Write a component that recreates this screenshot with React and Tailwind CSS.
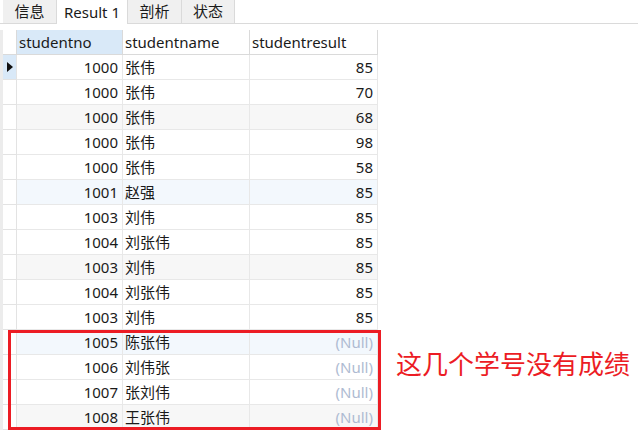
import React from "react";

const rows = [
  ["1000", "张伟", "85"],
  ["1000", "张伟", "70"],
  ["1000", "张伟", "68"],
  ["1000", "张伟", "98"],
  ["1000", "张伟", "58"],
  ["1001", "赵强", "85"],
  ["1003", "刘伟", "85"],
  ["1004", "刘张伟", "85"],
  ["1003", "刘伟", "85"],
  ["1004", "刘张伟", "85"],
  ["1003", "刘伟", "85"],
  ["1005", "陈张伟", null],
  ["1006", "刘伟张", null],
  ["1007", "张刘伟", null],
  ["1008", "王张伟", null],
];

const rowBg = (i) => {
  if (i % 3 !== 2) return "bg-white";
  return Math.floor(i / 3) % 2 === 0 ? "bg-[#f7f7f7]" : "bg-[#f3f8fd]";
};

const tabs = [
  { label: "信息", w: "w-[54px]" },
  { label: "Result 1", w: "w-[71px]", active: true },
  { label: "剖析", w: "w-[54px]" },
  { label: "状态", w: "w-[53px]" },
];

export default function App() {
  return (
    <div
      className="relative w-[638px] h-[442px] bg-white overflow-hidden text-[15px] text-[#1a1a1a]"
      style={{ fontFamily: '"Noto Sans", "Noto Sans CJK SC", sans-serif' }}
    >
      {/* tab strip */}
      <div className="flex h-[24px] pl-[3px] border-b border-[#dadada]">
        {tabs.map((t) => (
          <div
            key={t.label}
            className={`${t.w} flex items-center justify-center border-r border-[#dadada] ${
              t.active ? "bg-white h-[24px] -mb-px" : "bg-[#f0f0f0] h-[23px]"
            }`}
          >
            {t.label}
          </div>
        ))}
      </div>

      {/* grid */}
      <div className="mt-[6px] flex">
        <div className="w-[3px] bg-[#ececec]" />
        <div>
          <div className="grid grid-cols-[14px_106px_127px_128px] h-[25px]">
            <div className="border-r border-b border-[#dadada] bg-white" />
            <div className="bg-[#d9e9f8] border-r border-b border-[#dadada] pl-[2px] flex items-center">studentno</div>
            <div className="border-r border-b border-[#dadada] pl-[2px] flex items-center">studentname</div>
            <div className="border-r border-b border-[#dadada] pl-[2px] flex items-center">studentresult</div>
          </div>
          {rows.map((r, i) => (
            <div key={i} className="grid grid-cols-[14px_106px_127px_128px] h-[25px]">
              <div
                className={`border-r border-b border-[#e3e3e3] flex items-center justify-center ${
                  i === 0 ? "bg-[#d9e9f8]" : "bg-white"
                }`}
              >
                {i === 0 && (
                  <svg width="6" height="10" viewBox="0 0 6 10">
                    <path d="M0 0 L6 5 L0 10 Z" fill="#111" />
                  </svg>
                )}
              </div>
              <div className={`${rowBg(i)} border-r border-b border-[#e8e8e8] pr-[4px] flex items-center justify-end`}>
                {r[0]}
              </div>
              <div className={`${rowBg(i)} border-r border-b border-[#e8e8e8] pl-[2px] flex items-center`}>
                {r[1]}
              </div>
              <div
                className={`${rowBg(i)} border-r border-b border-[#e8e8e8] pr-[4px] flex items-center justify-end ${
                  r[2] ? "" : "text-[#aebbd2]"
                }`}
              >
                {r[2] ?? "(Null)"}
              </div>
            </div>
          ))}
        </div>
      </div>

      {/* annotation */}
      <div className="absolute left-[8px] top-[330px] w-[373px] h-[100px] border-[3px] border-[#ec1c24]" />
      <div
        className="absolute left-[396px] top-[346px] text-[26px] leading-[34px] text-[#ec1c24]"
        style={{ fontFamily: '"Noto Sans CJK SC", sans-serif' }}
      >
        这几个学号没有成绩
      </div>
    </div>
  );
}
